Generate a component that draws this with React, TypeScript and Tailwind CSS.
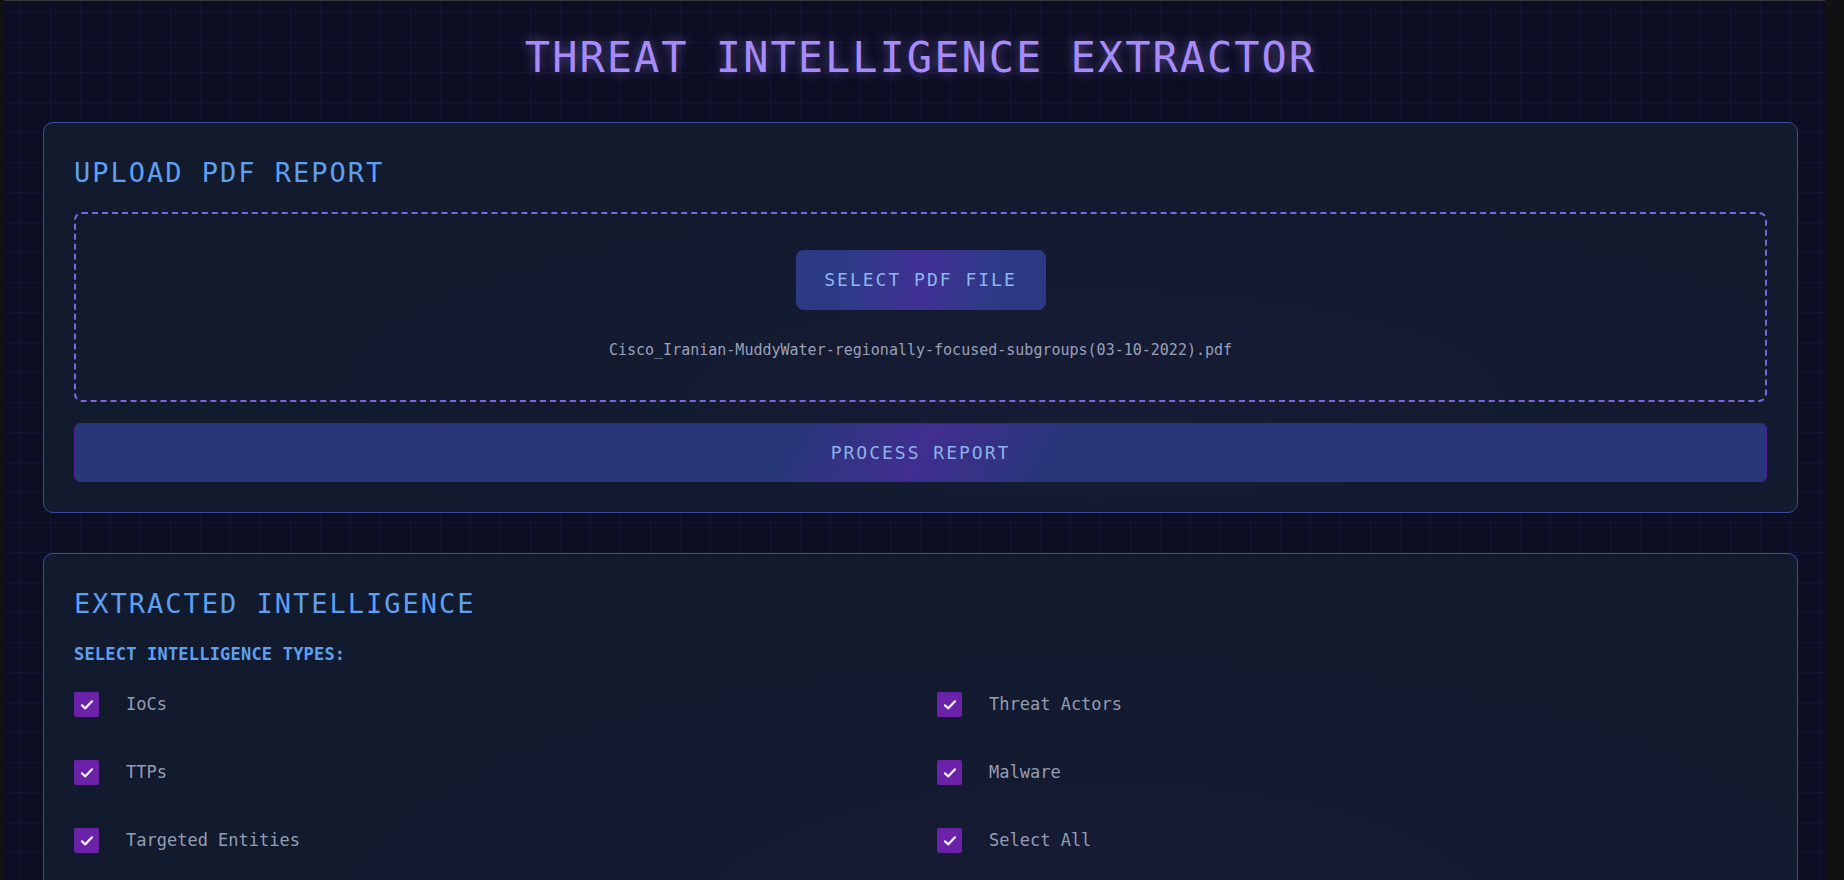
import React from 'react'

// intelligence type options, laid out in two columns (row-major)
const types = [
  { id: 'iocs', label: 'IoCs' },
  { id: 'actors', label: 'Threat Actors' },
  { id: 'ttps', label: 'TTPs' },
  { id: 'malware', label: 'Malware' },
  { id: 'targets', label: 'Targeted Entities' },
  { id: 'all', label: 'Select All' },
]

const fileName = 'Cisco_Iranian-MuddyWater-regionally-focused-subgroups(03-10-2022).pdf'

function CheckBox() {
  return (
    <div className="w-[25px] h-[25px] shrink-0 rounded-[2px] bg-[#6b21a8] flex items-center justify-center">
      <svg width="16" height="16" viewBox="0 0 24 24" fill="none" stroke="#f5f0ff" strokeWidth="3.4" strokeLinecap="round" strokeLinejoin="round">
        <path d="M4.5 12.5l5 4.5L19.5 6.5" />
      </svg>
    </div>
  )
}

function Panel({ title, children }: { title: string; children: React.ReactNode }) {
  return (
    <section className="rounded-[10px] border border-[#3d4aa0] bg-[#121a2e] [background-image:radial-gradient(ellipse_at_60%_70%,rgba(60,50,120,0.08),transparent_60%)] pt-[36px] px-[30px] pb-[30px]">
      <h2 className="text-[27px] leading-none tracking-[2px] text-[#5f9ff0]">{title}</h2>
      {children}
    </section>
  )
}

export default function App() {
  return (
    <div className="flex h-[880px] w-full overflow-hidden bg-[#111111] font-['DejaVu_Sans_Mono','Liberation_Mono',monospace]">
      <div className="w-[4px] shrink-0 bg-[#121212]" />
      <main className="flex-1 min-w-0 flex flex-col border-t border-[#3a3a3a] bg-[#0d0e24] [background-image:linear-gradient(rgba(90,100,210,0.07)_1px,transparent_1px),linear-gradient(90deg,rgba(90,100,210,0.07)_1px,transparent_1px)] [background-size:30px_30px] [background-position:16px_11px] pl-[39px] pr-[27px]">
        <h1 className="mt-[36px] text-center text-[42px] leading-none tracking-[2px] text-[#a78bfa] [text-shadow:0_0_12px_rgba(167,139,250,0.5)]">
          THREAT INTELLIGENCE EXTRACTOR
        </h1>

        <div className="mt-[43px]">
          <Panel title="UPLOAD PDF REPORT">
            <div className="mt-[26px] rounded-[8px] border-2 border-dashed border-[#7c66e0] flex flex-col items-center pt-[36px] pb-[42px]">
              <button className="w-[250px] h-[60px] rounded-[8px] bg-[#2c3a86] [background-image:linear-gradient(100deg,transparent_20%,rgba(80,40,160,0.55)_50%,transparent_80%)] text-[18px] leading-none tracking-[2px] text-[#8fb6f0]">
                SELECT PDF FILE
              </button>
              <p className="mt-[33px] text-[15px] leading-none text-[#9aa0b8]">{fileName}</p>
            </div>
            <button className="mt-[21px] w-full h-[59px] rounded-[6px] border border-[#4c1d95] bg-[#283779] [background-image:linear-gradient(120deg,transparent_42%,rgba(80,40,160,0.6)_50%,transparent_58%)] text-[18px] leading-none tracking-[2px] text-[#8fb0e8]">
              PROCESS REPORT
            </button>
          </Panel>
        </div>

        <div className="mt-[40px]">
          <Panel title="EXTRACTED INTELLIGENCE">
            <p className="mt-[29px] text-[17px] leading-none font-bold tracking-[0.2px] text-[#5f9ff0]">SELECT INTELLIGENCE TYPES:</p>
            <div className="mt-[29px] grid grid-cols-2 gap-x-[33px] gap-y-[43px]">
              {types.map((t) => (
                <label key={t.id} className="flex items-center gap-[27px] h-[25px]">
                  <CheckBox />
                  <span className="text-[17px] leading-none text-[#959db2]">{t.label}</span>
                </label>
              ))}
            </div>
            <div className="h-[200px]" />
          </Panel>
        </div>
      </main>
      <div className="w-[19px] shrink-0 bg-[#111111]" />
    </div>
  )
}
